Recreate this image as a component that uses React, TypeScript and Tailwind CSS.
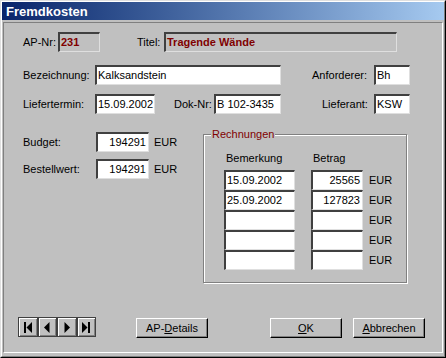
type FieldProps = {
  className?: string;
  value?: string;
  right?: boolean;
  gray?: boolean;
  bold?: boolean;
};

function Field({ className = '', value = '', right = false, gray = false, bold = false }: FieldProps) {
  return (
    <div
      className={`h-5 flex items-center overflow-hidden whitespace-nowrap border-t-2 border-l-2 border-t-[#404040] border-l-[#404040] border-b border-r border-b-[#dfdfdf] border-r-[#dfdfdf] ${
        gray ? 'bg-[#c0c0c0]' : 'bg-white'
      } ${right ? 'justify-end pr-[2px]' : 'pl-[1px]'} ${bold ? 'font-bold text-[#800000]' : 'text-black'} ${className}`}
    >
      {value}
    </div>
  );
}

function Btn({ className = '', children }: { className?: string; children: React.ReactNode }) {
  return (
    <button
      className={`h-5 flex items-center justify-center bg-[#c0c0c0] border-t border-l border-t-white border-l-white border-b border-r border-b-black border-r-black shadow-[inset_-1px_-1px_0_#808080] text-black ${className}`}
    >
      {children}
    </button>
  );
}

function NavBtn({ kind }: { kind: 'first' | 'prev' | 'next' | 'last' }) {
  return (
    <button className="flex-1 h-full flex items-center justify-center bg-[#c0c0c0] border border-[#404040] shadow-[inset_1px_1px_0_#fff,inset_-1px_-1px_0_#808080]">
      <svg width="10" height="11" viewBox="0 0 10 11">
        {kind === 'first' && (
          <>
            <rect x="1" y="0" width="2" height="11" fill="#000" />
            <polygon points="9,0 3.5,5.5 9,11" fill="#000" />
          </>
        )}
        {kind === 'prev' && <polygon points="7.5,0 2,5.5 7.5,11" fill="#000" />}
        {kind === 'next' && <polygon points="2.5,0 8,5.5 2.5,11" fill="#000" />}
        {kind === 'last' && (
          <>
            <polygon points="1,0 6.5,5.5 1,11" fill="#000" />
            <rect x="7" y="0" width="2" height="11" fill="#000" />
          </>
        )}
      </svg>
    </button>
  );
}

const rechnungen = [
  ['15.09.2002', '25565'],
  ['25.09.2002', '127823'],
  ['', ''],
  ['', ''],
  ['', ''],
];

export default function App() {
  return (
    <div className="w-[446px] h-[358px] bg-[#c0c0c0] font-['Liberation_Sans',Arial,sans-serif] text-[11px] leading-[13px] text-black border-t border-l border-t-[#dfdfdf] border-l-[#dfdfdf] border-b border-r border-b-black border-r-black">
      <div className="h-full flex flex-col border-t border-l border-t-white border-l-white border-b border-r border-b-[#808080] border-r-[#808080]">
        {/* Titelleiste */}
        <div className="h-[18px] shrink-0 flex items-center pl-1 bg-linear-to-r from-[#0a246a] to-[#a6caf0] text-white font-bold text-[13px]">
          Fremdkosten
        </div>

        {/* Inhalt */}
        <div className="mt-[2px] mx-px h-[331px] flex flex-col border-t border-l border-t-[#808080] border-l-[#808080] border-b border-r border-b-white border-r-white">
          <div className="mt-[9px] pl-[19px] flex items-center">
            <span className="w-[35px]">AP-Nr:</span>
            <Field className="w-[42px]" value="231" gray bold />
            <span className="ml-[37px] w-[27px]">Titel:</span>
            <Field className="w-[233px]" value="Tragende Wände" gray bold />
          </div>

          <div className="mt-[13px] pl-[19px] flex items-center">
            <span className="w-[72px]">Bezeichnung:</span>
            <Field className="w-[186px]" value="Kalksandstein" />
            <span className="ml-[31px] w-[62px]">Anforderer:</span>
            <Field className="w-[36px]" value="Bh" />
          </div>

          <div className="mt-[9px] pl-[19px] flex items-center">
            <span className="w-[72px]">Liefertermin:</span>
            <Field className="w-[60px]" value="15.09.2002" />
            <span className="ml-[19px] w-[40px] whitespace-nowrap">Dok-Nr:</span>
            <Field className="w-[67px]" value="B 102-3435" />
            <span className="ml-[41px] w-[52px]">Lieferant:</span>
            <Field className="w-[36px]" value="KSW" />
          </div>

          <div className="mt-[14px] flex items-start">
            <div className="w-[199px] pl-[19px]">
              <div className="mt-1 flex items-center">
                <span className="w-[73px]">Budget:</span>
                <Field className="w-[53px]" value="194291" right />
                <span className="ml-[5px]">EUR</span>
              </div>
              <div className="mt-[7px] flex items-center">
                <span className="w-[73px]">Bestellwert:</span>
                <Field className="w-[53px]" value="194291" right />
                <span className="ml-[5px]">EUR</span>
              </div>
            </div>

            <fieldset className="w-[204px] h-[155px] border border-[#808080] shadow-[inset_1px_1px_0_#fff,1px_1px_0_#fff]">
              <legend className="ml-[7px] px-px bg-[#c0c0c0] text-[#800000]">Rechnungen</legend>
              <div className="mt-[11px] pl-5 flex">
                <span className="w-[71px] pl-[2px]">Bemerkung</span>
                <span className="ml-4 pl-[2px]">Betrag</span>
              </div>
              <div className="mt-[5px] pl-5 flex flex-col">
                {rechnungen.map((r, i) => (
                  <div key={i} className="flex items-center">
                    <Field className="w-[71px]" value={r[0]} />
                    <Field className="ml-4 w-[52px]" value={r[1]} right />
                    <span className="ml-[6px]">EUR</span>
                  </div>
                ))}
              </div>
            </fieldset>
          </div>

          <div className="mt-[34px] pl-[14px] flex items-start">
            <div className="flex h-5 w-[78px]">
              <NavBtn kind="first" />
              <NavBtn kind="prev" />
              <NavBtn kind="next" />
              <NavBtn kind="last" />
            </div>
            <Btn className="ml-10 mt-px w-[72px]">
              AP-<span className="underline">D</span>etails
            </Btn>
            <Btn className="ml-[62px] mt-px w-[72px]">
              <span className="underline">O</span>K
            </Btn>
            <Btn className="ml-[11px] mt-px w-[72px]">
              <span className="underline">A</span>bbrechen
            </Btn>
          </div>
        </div>
      </div>
    </div>
  );
}
